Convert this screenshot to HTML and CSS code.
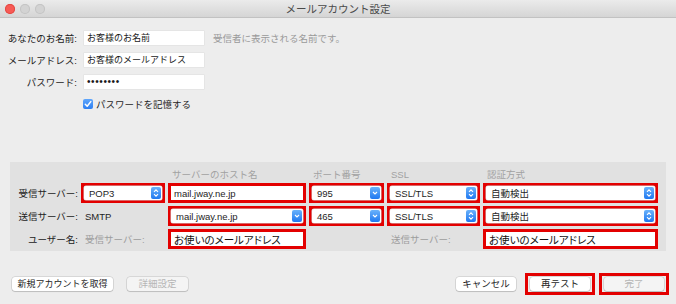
FILE: index.html
```html
<!DOCTYPE html>
<html lang="ja">
<head>
    <meta charset="UTF-8">
    <title>メールアカウント設定</title>
    <link rel="stylesheet" href="styles.css">
</head>
<body>

<div class="window">
    <header class="titlebar">
        <div class="lights">
            <span class="light close"></span>
            <span class="light"></span>
            <span class="light"></span>
        </div>
        <h1>メールアカウント設定</h1>
    </header>

    <section class="identity">
        <label class="label">あなたのお名前:</label>
        <div class="field">お客様のお名前</div>
        <span class="hint">受信者に表示される名前です。</span>

        <label class="label">メールアドレス:</label>
        <div class="field">お客様のメールアドレス</div>
        <span></span>

        <label class="label">パスワード:</label>
        <div class="field dots">••••••••</div>
        <span></span>

        <span></span>
        <div class="remember">
            <span class="checkbox">
                <svg width="10" height="10" viewBox="0 0 10 10"><path d="M2.3 5.2 L4.2 7.2 L7.8 2.6" fill="none" stroke="#fff" stroke-width="1.5" stroke-linecap="round" stroke-linejoin="round"/></svg>
            </span>
            パスワードを記憶する
        </div>
    </section>

    <section class="servers">
        <span></span>
        <span></span>
        <span class="head">サーバーのホスト名</span>
        <span class="head">ポート番号</span>
        <span class="head">SSL</span>
        <span class="head">認証方式</span>

        <span class="label">受信サーバー:</span>
        <div class="mark"><div class="select"><span class="value">POP3</span><span class="stepper up-down"></span></div></div>
        <div class="mark"><div class="input latin">mail.jway.ne.jp</div></div>
        <div class="mark"><div class="select"><span class="value">995</span><span class="stepper combo"></span></div></div>
        <div class="mark"><div class="select"><span class="value">SSL/TLS</span><span class="stepper up-down"></span></div></div>
        <div class="mark"><div class="select"><span class="value">自動検出</span><span class="stepper up-down"></span></div></div>

        <span class="label">送信サーバー:</span>
        <span class="plain">SMTP</span>
        <div class="mark"><div class="select"><span class="value">mail.jway.ne.jp</span><span class="stepper combo"></span></div></div>
        <div class="mark"><div class="select"><span class="value">465</span><span class="stepper combo"></span></div></div>
        <div class="mark"><div class="select"><span class="value">SSL/TLS</span><span class="stepper up-down"></span></div></div>
        <div class="mark"><div class="select"><span class="value">自動検出</span><span class="stepper up-down"></span></div></div>

        <span class="label">ユーザー名:</span>
        <span class="plain muted">受信サーバー:</span>
        <div class="mark"><div class="input user">お使いのメールアドレス</div></div>
        <span></span>
        <span class="plain muted">送信サーバー:</span>
        <div class="mark"><div class="input user">お使いのメールアドレス</div></div>
    </section>

    <footer class="actions">
        <div class="group">
            <button class="btn new-account">新規アカウントを取得</button>
            <button class="btn disabled">詳細設定</button>
        </div>
        <div class="group right">
            <button class="btn cancel">キャンセル</button>
            <div class="mark btn-mark"><button class="btn">再テスト</button></div>
            <div class="mark btn-mark"><button class="btn disabled">完了</button></div>
        </div>
    </footer>
</div>

</body>
</html>
```

FILE: styles.css
```css
body {
    margin: 0;
    padding: 0;
    background-color: #ededed;
    font-family: "Liberation Sans", "Noto Sans CJK JP", sans-serif;
    font-size: 9.5px;
    color: #1e1e1e;
}
.window {
    width: 676px;
    height: 304px;
    overflow: hidden;
    background-color: #ededed;
}
.titlebar {
    height: 17px;
    background: linear-gradient(#ebebeb, #d5d5d5);
    border-bottom: 1px solid #c2c2c2;
    display: flex;
    align-items: center;
    justify-content: center;
    position: relative;
}
.titlebar h1 {
    margin: 0;
    font-size: 10.5px;
    font-weight: normal;
    color: #4a4a4a;
}
.lights {
    position: absolute;
    left: 5px;
    top: 4px;
    display: flex;
    gap: 5px;
}
.light {
    width: 10px;
    height: 10px;
    border-radius: 50%;
    background-color: #d3d3d3;
    box-shadow: inset 0 0 0 1px #c4c4c4;
}
.light.close {
    background-color: #f75a55;
    box-shadow: inset 0 0 0 1px #e24843;
}

/* top form */
.identity {
    display: grid;
    grid-template-columns: 77px 120px auto;
    grid-auto-rows: 14px;
    column-gap: 7px;
    row-gap: 8px;
    margin-top: 13px;
    align-items: center;
}
.label {
    text-align: right;
    color: #222;
    white-space: nowrap;
}
.field {
    height: 14px;
    background-color: #fff;
    box-shadow: 0 0 0 0.5px #dedede;
    padding-left: 3px;
    line-height: 14px;
    font-size: 9px;
    color: #1a1a1a;
}
.field.dots {
    font-size: 10px;
    letter-spacing: 0.6px;
}
.hint {
    color: #9a9a9a;
    margin-left: 2px;
}
.remember {
    display: flex;
    align-items: center;
    gap: 3px;
    margin-left: -1px;
    white-space: nowrap;
}
.checkbox {
    width: 10px;
    height: 10px;
    border-radius: 2px;
    background: linear-gradient(#5fa6fb, #2d7ff2);
    display: flex;
}

/* server panel */
.servers {
    margin: 51px 10px 0 10px;
    background-color: #e1e1e1;
    padding: 6px 8px 2px 0;
    display: grid;
    grid-template-columns: 68px 84px 138px 75px 93px 175px;
    grid-template-rows: 12px 20px 20px 20px;
    column-gap: 3px;
    row-gap: 3px;
    align-items: center;
}
.head {
    color: #a2a2a2;
    padding-left: 4px;
    white-space: nowrap;
}
.plain {
    padding-left: 4px;
    white-space: nowrap;
}
.muted {
    color: #9d9d9d;
}
.mark {
    height: 20px;
    box-sizing: border-box;
    border: 3px solid #e30000;
    display: flex;
}
.select {
    flex: 1;
    display: flex;
    align-items: center;
    background-color: #fff;
    border-radius: 2px;
    box-shadow: 0 0 0 0.5px #d0d0d0;
}
.select .value {
    flex: 1;
    padding-left: 5px;
    white-space: nowrap;
    overflow: hidden;
}
.stepper {
    width: 10px;
    height: 12px;
    margin-right: 1px;
    border-radius: 2px;
    background-color: #3a8ef6;
    background-repeat: no-repeat;
    background-position: center;
}
.stepper.up-down {
    background-image: url("data:image/svg+xml,%3Csvg xmlns='http://www.w3.org/2000/svg' width='10' height='12'%3E%3Cpath d='M3 4.8 L5 2.8 L7 4.8 M3 7.2 L5 9.2 L7 7.2' fill='none' stroke='white' stroke-width='1.1'/%3E%3C/svg%3E"), linear-gradient(#6ab2fb, #1f78f0);
}
.stepper.combo {
    background-image: url("data:image/svg+xml,%3Csvg xmlns='http://www.w3.org/2000/svg' width='10' height='12'%3E%3Cpath d='M3 5 L5 7 L7 5' fill='none' stroke='white' stroke-width='1.1'/%3E%3C/svg%3E"), linear-gradient(#6ab2fb, #1f78f0);
}
.input {
    flex: 1;
    background-color: #fff;
    padding-left: 3px;
    display: flex;
    align-items: center;
    white-space: nowrap;
}
.input.user {
    font-size: 10.5px;
    color: #111;
    font-feature-settings: "palt";
}

/* bottom buttons */
.actions {
    margin-top: 22px;
    height: 22px;
    padding: 0 7px 0 12px;
    display: flex;
    justify-content: space-between;
    align-items: center;
}
.group {
    display: flex;
    align-items: center;
    gap: 14px;
}
.group.right {
    gap: 4px;
}
.btn {
    height: 14px;
    padding: 0;
    border: none;
    border-radius: 3px;
    background-color: #fff;
    box-shadow: 0 0 0 0.5px rgba(0, 0, 0, 0.18), 0 1px 1px rgba(0, 0, 0, 0.12);
    font-family: "Liberation Sans", "Noto Sans CJK JP", sans-serif;
    font-size: 9.5px;
    color: #1e1e1e;
    line-height: 14px;
    white-space: nowrap;
}
.btn.new-account {
    width: 101px;
    font-size: 9px;
}
.btn.disabled {
    background-color: #f4f4f4;
    color: #b6b6b6;
    width: 61px;
}
.btn.cancel {
    width: 60px;
    margin-right: 5px;
}
.btn-mark {
    height: 22px;
    width: 70px;
    padding: 0 2px;
    align-items: center;
}
.btn-mark .btn {
    width: 100%;
}
```
